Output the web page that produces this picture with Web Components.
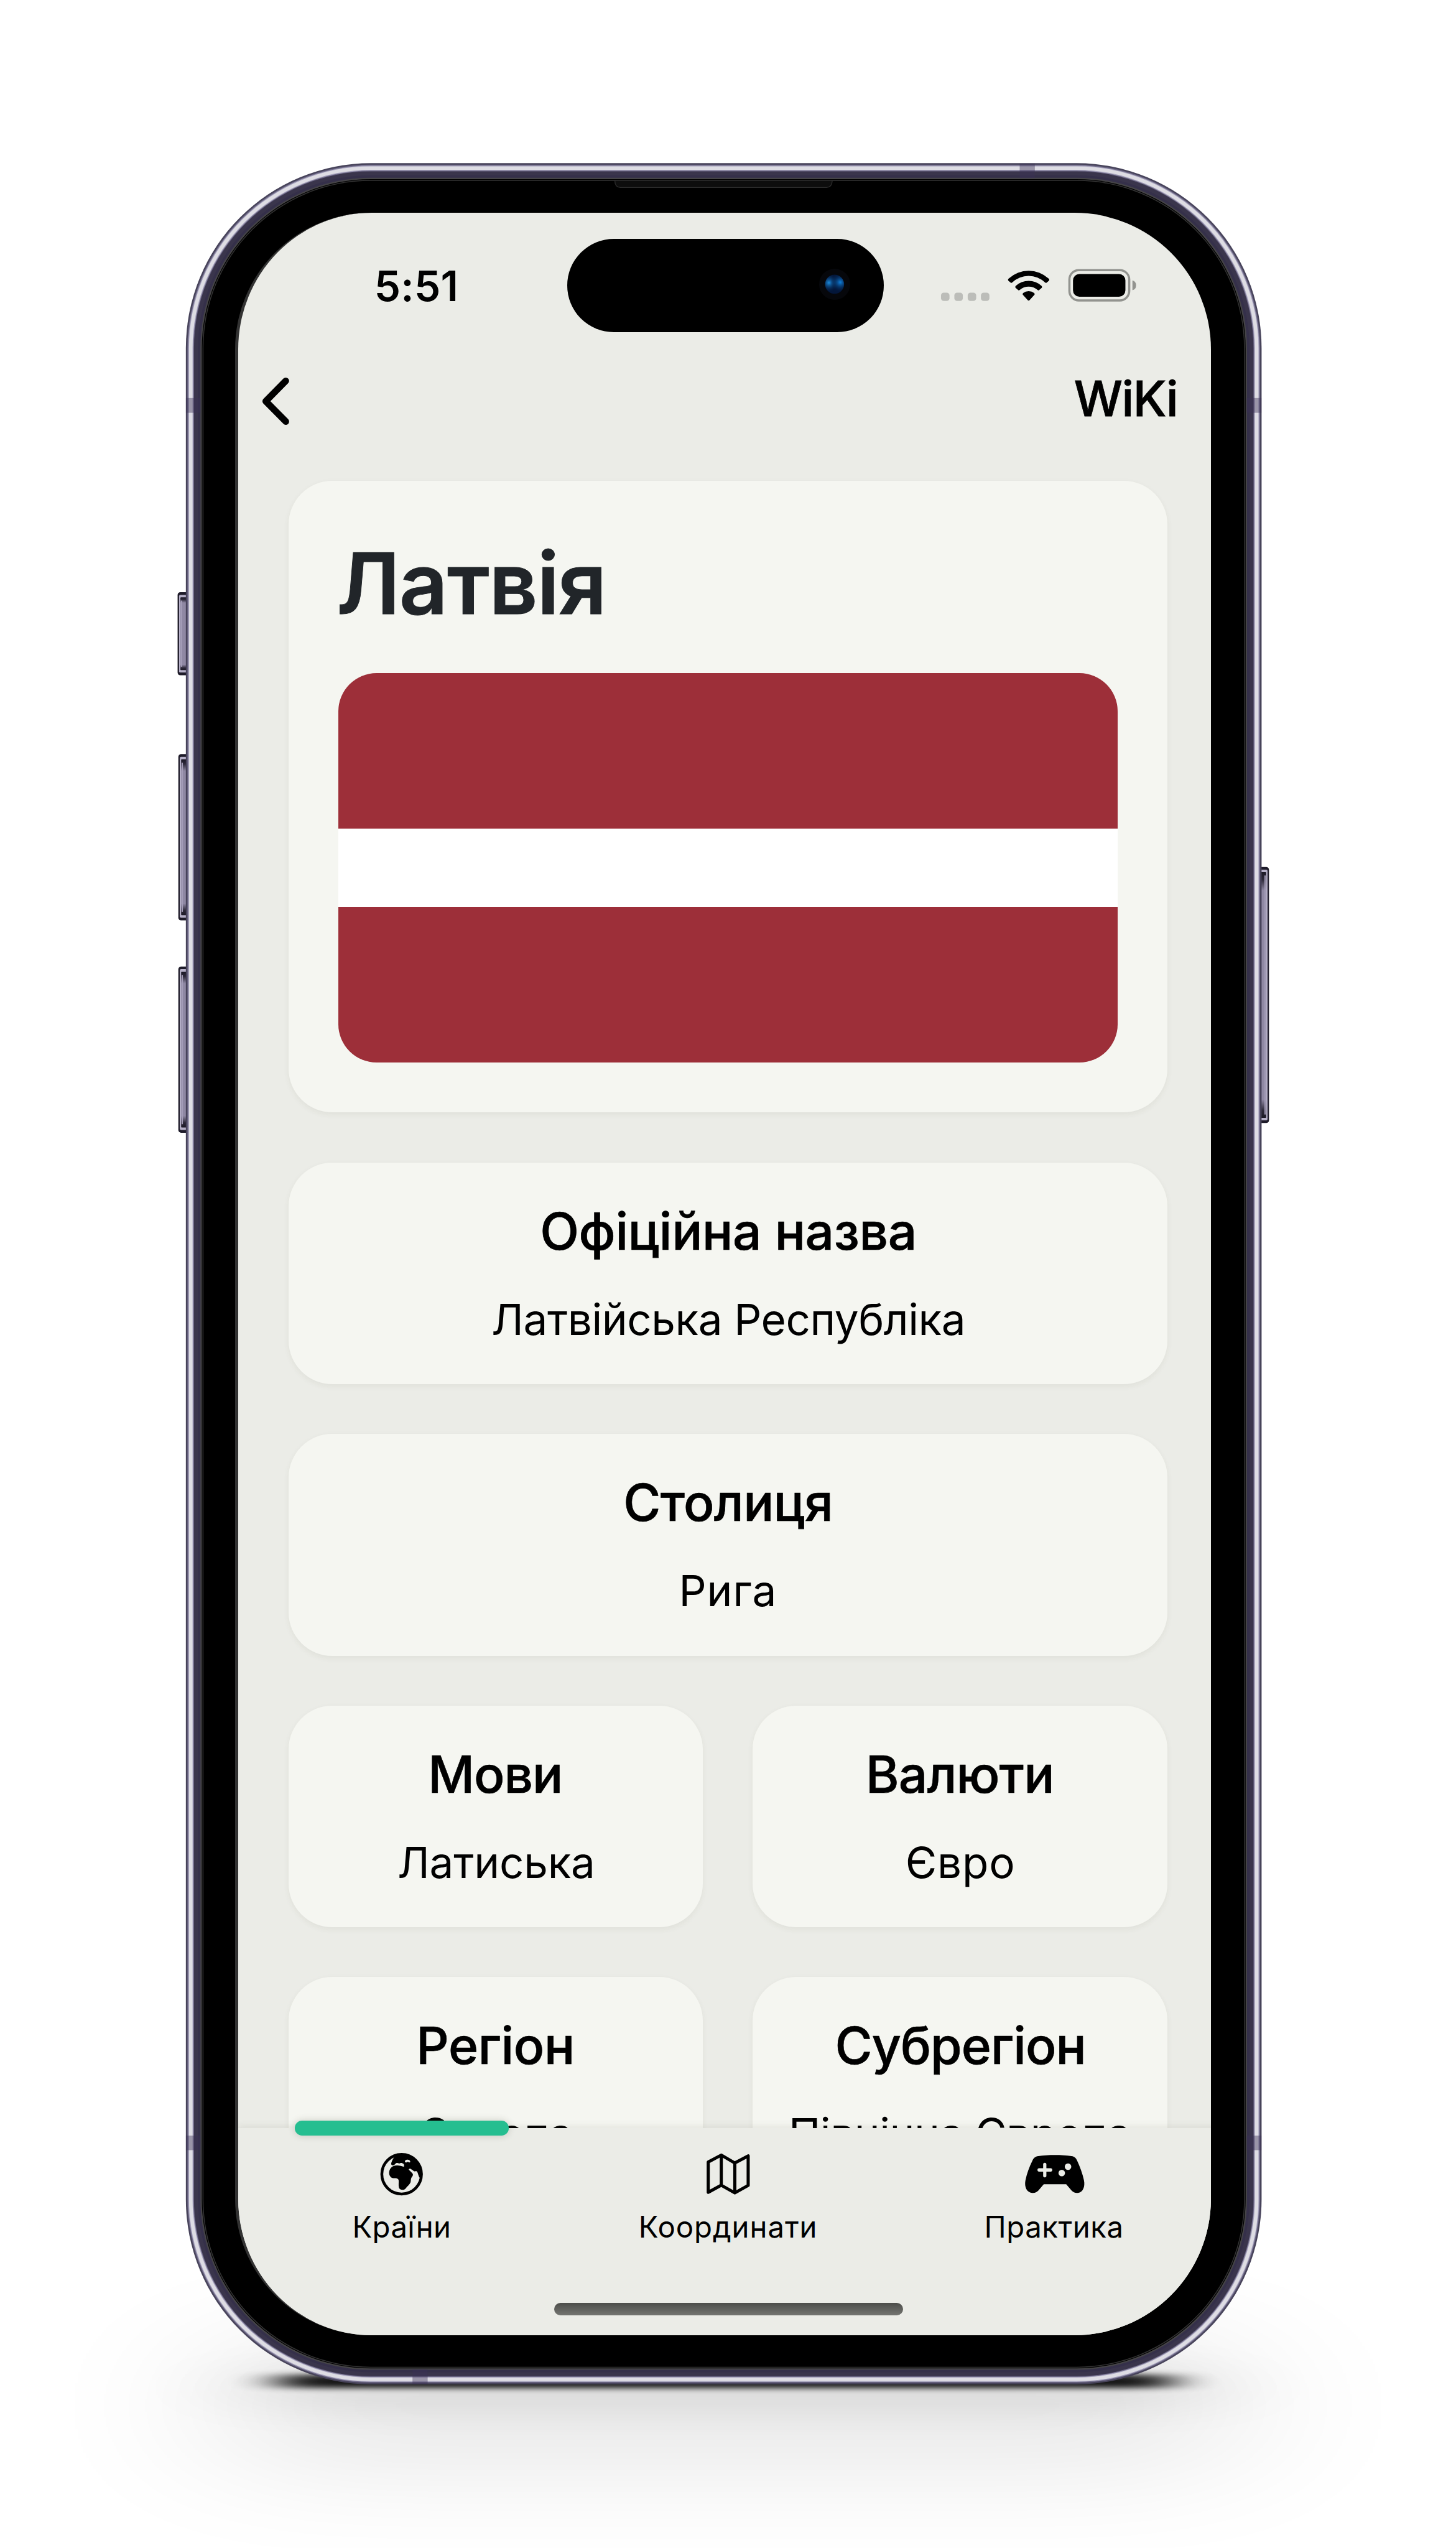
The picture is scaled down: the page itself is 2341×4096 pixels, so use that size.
<!DOCTYPE html>
<html lang="uk">
<head>
<meta charset="utf-8">
<title>WiKi</title>
<style>
html,body{margin:0;padding:0;background:#fff;overflow:hidden}
body{font-family:Inter,"Liberation Sans",sans-serif;color:#000}
</style>
</head>
<body>
<phone-stage>
  <phone-body slot="device"></phone-body>
  <phone-screen slot="screen">
    <status-bar slot="top"></status-bar>
    <nav-header slot="top"><fit-text size="80" weight="500" ink="167" stroke=".9">WiKi</fit-text></nav-header>
    <country-card slot="content"><fit-text size="140" weight="600" ink="432" stroke="1">Латвія</fit-text></country-card>
    <info-card slot="content"><fit-text slot="title" size="84" weight="500" ink="612" stroke=".7">Офіційна назва</fit-text><fit-text size="71" ink="774">Латвійська Республіка</fit-text></info-card>
    <info-card slot="content"><fit-text slot="title" size="84" weight="500" ink="337" stroke=".7">Столиця</fit-text><fit-text size="71" ink="150">Рига</fit-text></info-card>
    <card-row slot="content">
      <info-card><fit-text slot="title" size="84" weight="500" ink="211" stroke=".7">Мови</fit-text><fit-text size="71" ink="318">Латиська</fit-text></info-card>
      <info-card><fit-text slot="title" size="84" weight="500" ink="300" stroke=".7">Валюти</fit-text><fit-text size="71" ink="173">Євро</fit-text></info-card>
    </card-row>
    <card-row slot="content">
      <info-card><fit-text slot="title" size="84" weight="500" ink="250" stroke=".7">Регіон</fit-text><fit-text size="71" ink="245">Європа</fit-text></info-card>
      <info-card><fit-text slot="title" size="84" weight="500" ink="405" stroke=".7">Субрегіон</fit-text><fit-text size="71" ink="554">Північна Європа</fit-text></info-card>
    </card-row>
    <tab-bar slot="bottom">
      <tab-item icon="globe"><fit-text size="48.5" ink="155">Країни</fit-text></tab-item>
      <tab-item icon="map"><fit-text size="48.5" ink="286.5">Координати</fit-text></tab-item>
      <tab-item icon="pad"><fit-text size="48.5" ink="222">Практика</fit-text></tab-item>
    </tab-bar>
  </phone-screen>
</phone-stage>
<script>
const define = (name, html, connected) => customElements.define(name, class extends HTMLElement {
  constructor() { super(); this.attachShadow({mode: 'open'}).innerHTML = html; }
  connectedCallback() { if (connected) connected.call(this, this.shadowRoot); }
});

/* Text whose box is exactly its ink width; tracking is derived from that width. */
const pen = document.createElement('canvas').getContext('2d');
define('fit-text', `<style>
:host{display:block;white-space:nowrap;line-height:1;flex:none}
span{display:block}
</style><span><slot></slot></span>`, function (root) {
  const text = this.textContent, size = +this.getAttribute('size'), ink = +this.getAttribute('ink');
  const weight = this.getAttribute('weight') || 400, stroke = this.getAttribute('stroke') || 0;
  pen.font = `${weight} ${size}px Inter, "Liberation Sans", sans-serif`;
  const m = pen.measureText(text);
  const natural = m.actualBoundingBoxLeft + m.actualBoundingBoxRight;
  this.style.cssText = `font-size:${size}px;font-weight:${weight};width:${ink}px;height:${size}px;letter-spacing:${((ink - natural) / (text.length - 1)).toFixed(3)}px;-webkit-text-stroke:${stroke}px currentColor`;
  root.querySelector('span').style.marginLeft = m.actualBoundingBoxLeft + 'px';
});

define('phone-stage', `<style>
:host{display:grid;zoom:.9753;width:2401px;height:4201px;overflow:hidden}
::slotted(*){grid-area:1/1}
</style><slot name="device"></slot><slot name="screen"></slot>`);

const shell = [[0,'#47435a'],[2.5,'#6d6886'],[4,'#a7a3bd'],[5.2,'#dedde4'],[11,'#a7a3bd'],[12.2,'#6d6886'],[13.4,'#3a354c'],[20,'#35304a'],[24,'#454447'],[26.3,'#000'],[27.5,'#343434'],[29,'#000']]
  .map(([i, c]) => `<rect x="${306.4+i}" y="${269+i}" width="${1773.4-2*i}" height="${3661-2*i}" rx="${305-i}" fill="${c}"/>`).join('');
const button = (x, y, h, flip) => `<g transform="translate(${x} ${y})${flip ? ' scale(-1 1)' : ''}">
<rect width="20" height="${h}" rx="4.5" fill="#1e1b29"/><rect x="2.4" y="4.5" width="16" height="${h-9}" rx="2" fill="#b6b0c8"/>
<rect x="4.6" y="8.5" width="14" height="${h-17}" rx="1" fill="url(#btn)"/><rect x="5.5" y="14" width="2" height="${h-28}" fill="#a39cb7"/></g>`;
const band = (x, y, w, h) => `<rect x="${x}" y="${y}" width="${w}" height="${h}" fill="#3b3156" opacity=".42"/>`;
define('phone-body', `<style>:host{display:block}svg{display:block}</style>
<svg width="2401" height="4201" viewBox="0 0 2401 4201">
<defs>
<filter id="far" x="-50%" y="-200%" width="200%" height="500%"><feGaussianBlur stdDeviation="160 90"/></filter>
<filter id="mid" x="-50%" y="-300%" width="200%" height="700%"><feGaussianBlur stdDeviation="110 30"/></filter>
<filter id="near" x="-20%" y="-300%" width="140%" height="700%"><feGaussianBlur stdDeviation="38 5"/></filter>
<linearGradient id="btn" x1="0" x2="0" y1="0" y2="1"><stop offset="0" stop-color="#1c1926"/><stop offset=".03" stop-color="#2c2838"/><stop offset=".075" stop-color="#8f88a3"/><stop offset=".925" stop-color="#8f88a3"/><stop offset=".97" stop-color="#2c2838"/><stop offset="1" stop-color="#1c1926"/></linearGradient>
</defs>
<rect x="370" y="3870" width="1660" height="190" fill="#000" opacity=".1" filter="url(#far)"/>
<rect x="420" y="3905" width="1560" height="60" fill="#000" opacity=".09" filter="url(#mid)"/>
<rect x="460" y="3914" width="1470" height="22" rx="8" fill="#000" opacity=".9" filter="url(#near)"/>
${button(292.8,976,137)}${button(294,1243,274)}${button(294,1593,274)}${button(2092,1429,422,true)}
${shell}
${band(1681,269.5,25,24)}${band(680,3905,25,24.5)}
${band(306.5,656,24,24.4)}${band(2055,656,24.5,24.4)}${band(306.5,3520,24,24)}${band(2055,3520,24.5,24)}
<path d="M1013.6 297.5q0 11 9 11.5h340q9-.5 9.4-11.5z" fill="#0d0d0d" stroke="#2c2c2c" stroke-width="1.4"/>
</svg>`);

define('phone-screen', `<style>
:host{display:flex;flex-direction:column;box-sizing:border-box;width:1609.3px;height:3498px;margin:351px 0 0 387.3px;border-left:6px solid #333;border-radius:225px;background:#ebece7;overflow:hidden;position:relative}
main{flex:1;min-height:0;overflow:hidden;display:flex;flex-direction:column;gap:82.4px;padding:156.8px 0 0 82.900px;box-sizing:border-box}
.island{position:absolute;left:542.400px;top:43px;width:522.6px;height:153.5px;border-radius:77px;background:#000}
.cam{position:absolute;left:415.5px;top:49px;width:51px;height:51px;border-radius:50%;background:#06070b;display:block}
</style><slot name="top"></slot><main><slot name="content"></slot></main><slot name="bottom"></slot>
<div class="island"><svg class="cam" viewBox="0 0 51 51"><defs><radialGradient id="l" cx=".2" cy=".42" r=".5"><stop offset="0" stop-color="#1a8ce0"/><stop offset="1" stop-color="#031a40" stop-opacity="0"/></radialGradient><radialGradient id="r" cx=".8" cy=".4" r=".52"><stop offset="0" stop-color="#0f80dc"/><stop offset="1" stop-color="#031a40" stop-opacity="0"/></radialGradient></defs><circle cx="25.5" cy="25.5" r="15.8" fill="#03163a"/><circle cx="25.5" cy="25.5" r="15.5" fill="url(#l)"/><circle cx="25.5" cy="25.5" r="15.5" fill="url(#r)"/></svg></div>`);

define('status-bar', `<style>
:host{display:flex;align-items:flex-start;height:230px;box-sizing:border-box;padding:86px 0 0 228.6px;flex:none}
.icons{display:block;margin:4px 0 0 799px;flex:none}
</style><fit-text size="69" weight="600" ink="130.5">5:51</fit-text>
<svg class="icons" width="324" height="60" viewBox="1550 441 324 60">
<g fill="#bcbdb9"><rect x="1551" y="482.5" width="14" height="13.6" rx="4.5"/><rect x="1573" y="482.5" width="14" height="13.6" rx="4.5"/><rect x="1595" y="482.5" width="14" height="13.6" rx="4.5"/><rect x="1616.8" y="482.5" width="14" height="13.6" rx="4.5"/></g>
<path d="M1662.6 459.2A48.3 48.3 0 0 1 1728.400 459.200Q1730.500 461 1728.700 463L1725 466Q1723.700 466.800 1722.500 465.700A39 39 0 0 0 1668.500 465.700Q1667.300 466.800 1666 466L1662.300 463Q1660.500 461 1662.600 459.200Z M1674.300 471.300A31.500 31.500 0 0 1 1716.700 471.300Q1718.300 473 1717 474.500L1712.500 478.300Q1711.300 479 1710.100 478A22 22 0 0 0 1680.900 478Q1679.700 479 1678.500 478.300L1674 474.500Q1672.700 473 1674.300 471.300Z M1686.500 483A14.500 14.500 0 0 1 1704.500 483Q1706.300 484.700 1704.700 486.500L1697 494.800Q1695.500 496.200 1694 494.800L1686.300 486.500Q1684.700 484.700 1686.500 483Z"/>
<rect x="1762.700" y="445.300" width="98.600" height="50" rx="15.500" fill="none" stroke="#92938f" stroke-width="3.600"/>
<rect x="1768.600" y="451.800" width="86.400" height="37.400" rx="10.500"/>
<path d="M1866.600 462.400q6 1.500 6 8t-6 8z" fill="#92938f"/>
</svg>`);

define('nav-header', `<style>
:host{display:flex;justify-content:space-between;align-items:flex-start;box-sizing:border-box;height:55px;padding:36px 58.200px 0 37px;flex:none}
svg{display:block;margin-top:1px}
</style><svg width="52" height="86" viewBox="429 618 52 86"><path d="M470.500 627.500L437.500 661L470.500 694.500" fill="none" stroke="#000" stroke-width="11" stroke-linecap="round" stroke-linejoin="round"/></svg><slot></slot>`);

const card = 'background:#f5f6f1;border-radius:72px;box-shadow:0 4px 10px rgba(60,60,40,.06);box-sizing:border-box;flex:none;';
define('country-card', `<style>
:host{display:flex;flex-direction:column;width:1449.600px;height:1041px;padding:99px 82.300px 0 84.300px;gap:77.200px;color:#212529;${card}}
.flag{margin-left:-2px;width:1284.500px;height:642.700px;border-radius:63px;overflow:hidden;display:grid;grid-template-rows:2fr 1fr 2fr;background:#9d2f39}
.flag i:nth-child(2){background:#fff}
</style><slot></slot><div class="flag"><i></i><i></i><i></i></div>`);

define('info-card', `<style>
:host{display:flex;flex-direction:column;align-items:center;width:var(--card-width,1449.600px);height:365.200px;padding-top:71.600px;gap:67.900px;${card}}
</style><slot name="title"></slot><slot></slot>`);

define('card-row', `<style>
:host{display:flex;gap:82px;flex:none;--card-width:683.800px}
</style><slot></slot>`);

define('tab-bar', `<style>
:host{display:flex;flex-direction:column;width:1615px;height:341.400px;flex:none;background:#ebece7;position:relative;box-shadow:0 -2px 12px rgba(60,60,40,.1)}
nav{display:grid;grid-template-columns:repeat(3,537.700px);padding:40.200px 0 0 1px}
.mark{position:absolute;left:94px;top:-12px;width:352.800px;height:24.500px;border-radius:12px;background:#25be90;box-shadow:0 0 12px rgba(60,60,40,.22)}
.home{width:575px;height:20.600px;border-radius:10.300px;margin:101.500px 0 0 521px;background:linear-gradient(#4c4d4a,#747571)}
</style><div class="mark"></div><nav><slot></slot></nav><div class="home"></div>`);

const icons = {
globe: `<svg viewBox="156 83.500 300 216"><circle cx="306" cy="191.500" r="98" fill="none" stroke="#000" stroke-width="14"/>
<path d="M268 108C262 118 254 132 254 142C258 150 268 150 273 142C278 134 288 134 293 139C298 138 302 134 309 137C317 138 320 146 317 155C304 149 280 145 266 151C252 157 245 169 244 184C244 199 253 210 265 211C277 212 288 210 291 220C293 231 289 246 293 259C298 271 318 273 326 262C333 252 346 243 350 232C353 222 350 214 357 205C361 200 364 194 360 188C354 180 345 174 341 167C346 162 352 165 356 169C362 172 365 178 372 178C380 171 385 181 387 190C389 199 393 207 396 210L403 205C409 160 385 105 330 94C303 90 282 96 268 108ZM322 130C322 121 330 118 337 120C346 121 350 126 348 133C340 134 338 128 333 131C328 135 323 134 322 130Z" fill-rule="evenodd"/></svg>`,
map: `<svg viewBox="92 83.500 300 216"><path d="M143.500 131L208 97L275 136L341 101V247L275 284L208 246L143.500 281ZM208 97V246M275 136V284" fill="none" stroke="#000" stroke-width="15.500" stroke-linejoin="round"/></svg>`,
pad: `<svg viewBox="262 83.500 300 216"><path fill-rule="evenodd" d="M334 102C382 95 450 95 498 102C513 104 520 111 526 124C539 153 553 187 560 222C566 252 556 281 530 284C518 286 507 281 499 273L472 241H361L334 273C326 281 315 286 303 284C276 281 265 253 270 224C277 187 291 153 305 124C311 111 319 104 334 102ZM366 135Q358 135 358 143V162H338Q330 162 330 170.500Q330 179 338 179H358V199Q358 207 366 207Q374 207 374 199V179H395Q403 179 403 170.500Q403 162 395 162H374V143Q374 135 366 135ZM481 138A16.200 16.200 0 1 0 481 170.400A16.200 16.200 0 1 0 481 138ZM450 169.500A16.200 16.200 0 1 0 450 201.900A16.200 16.200 0 1 0 450 169.500Z"/></svg>`
};
define('tab-item', `<style>
:host{display:flex;flex-direction:column;align-items:center;gap:26px}
svg{display:block;width:100px;height:72px;overflow:visible}
#icon{display:block}
</style><div id="icon"></div><slot></slot>`, function (root) {
  root.getElementById('icon').innerHTML = icons[this.getAttribute('icon')];
});
</script>
</body>
</html>
